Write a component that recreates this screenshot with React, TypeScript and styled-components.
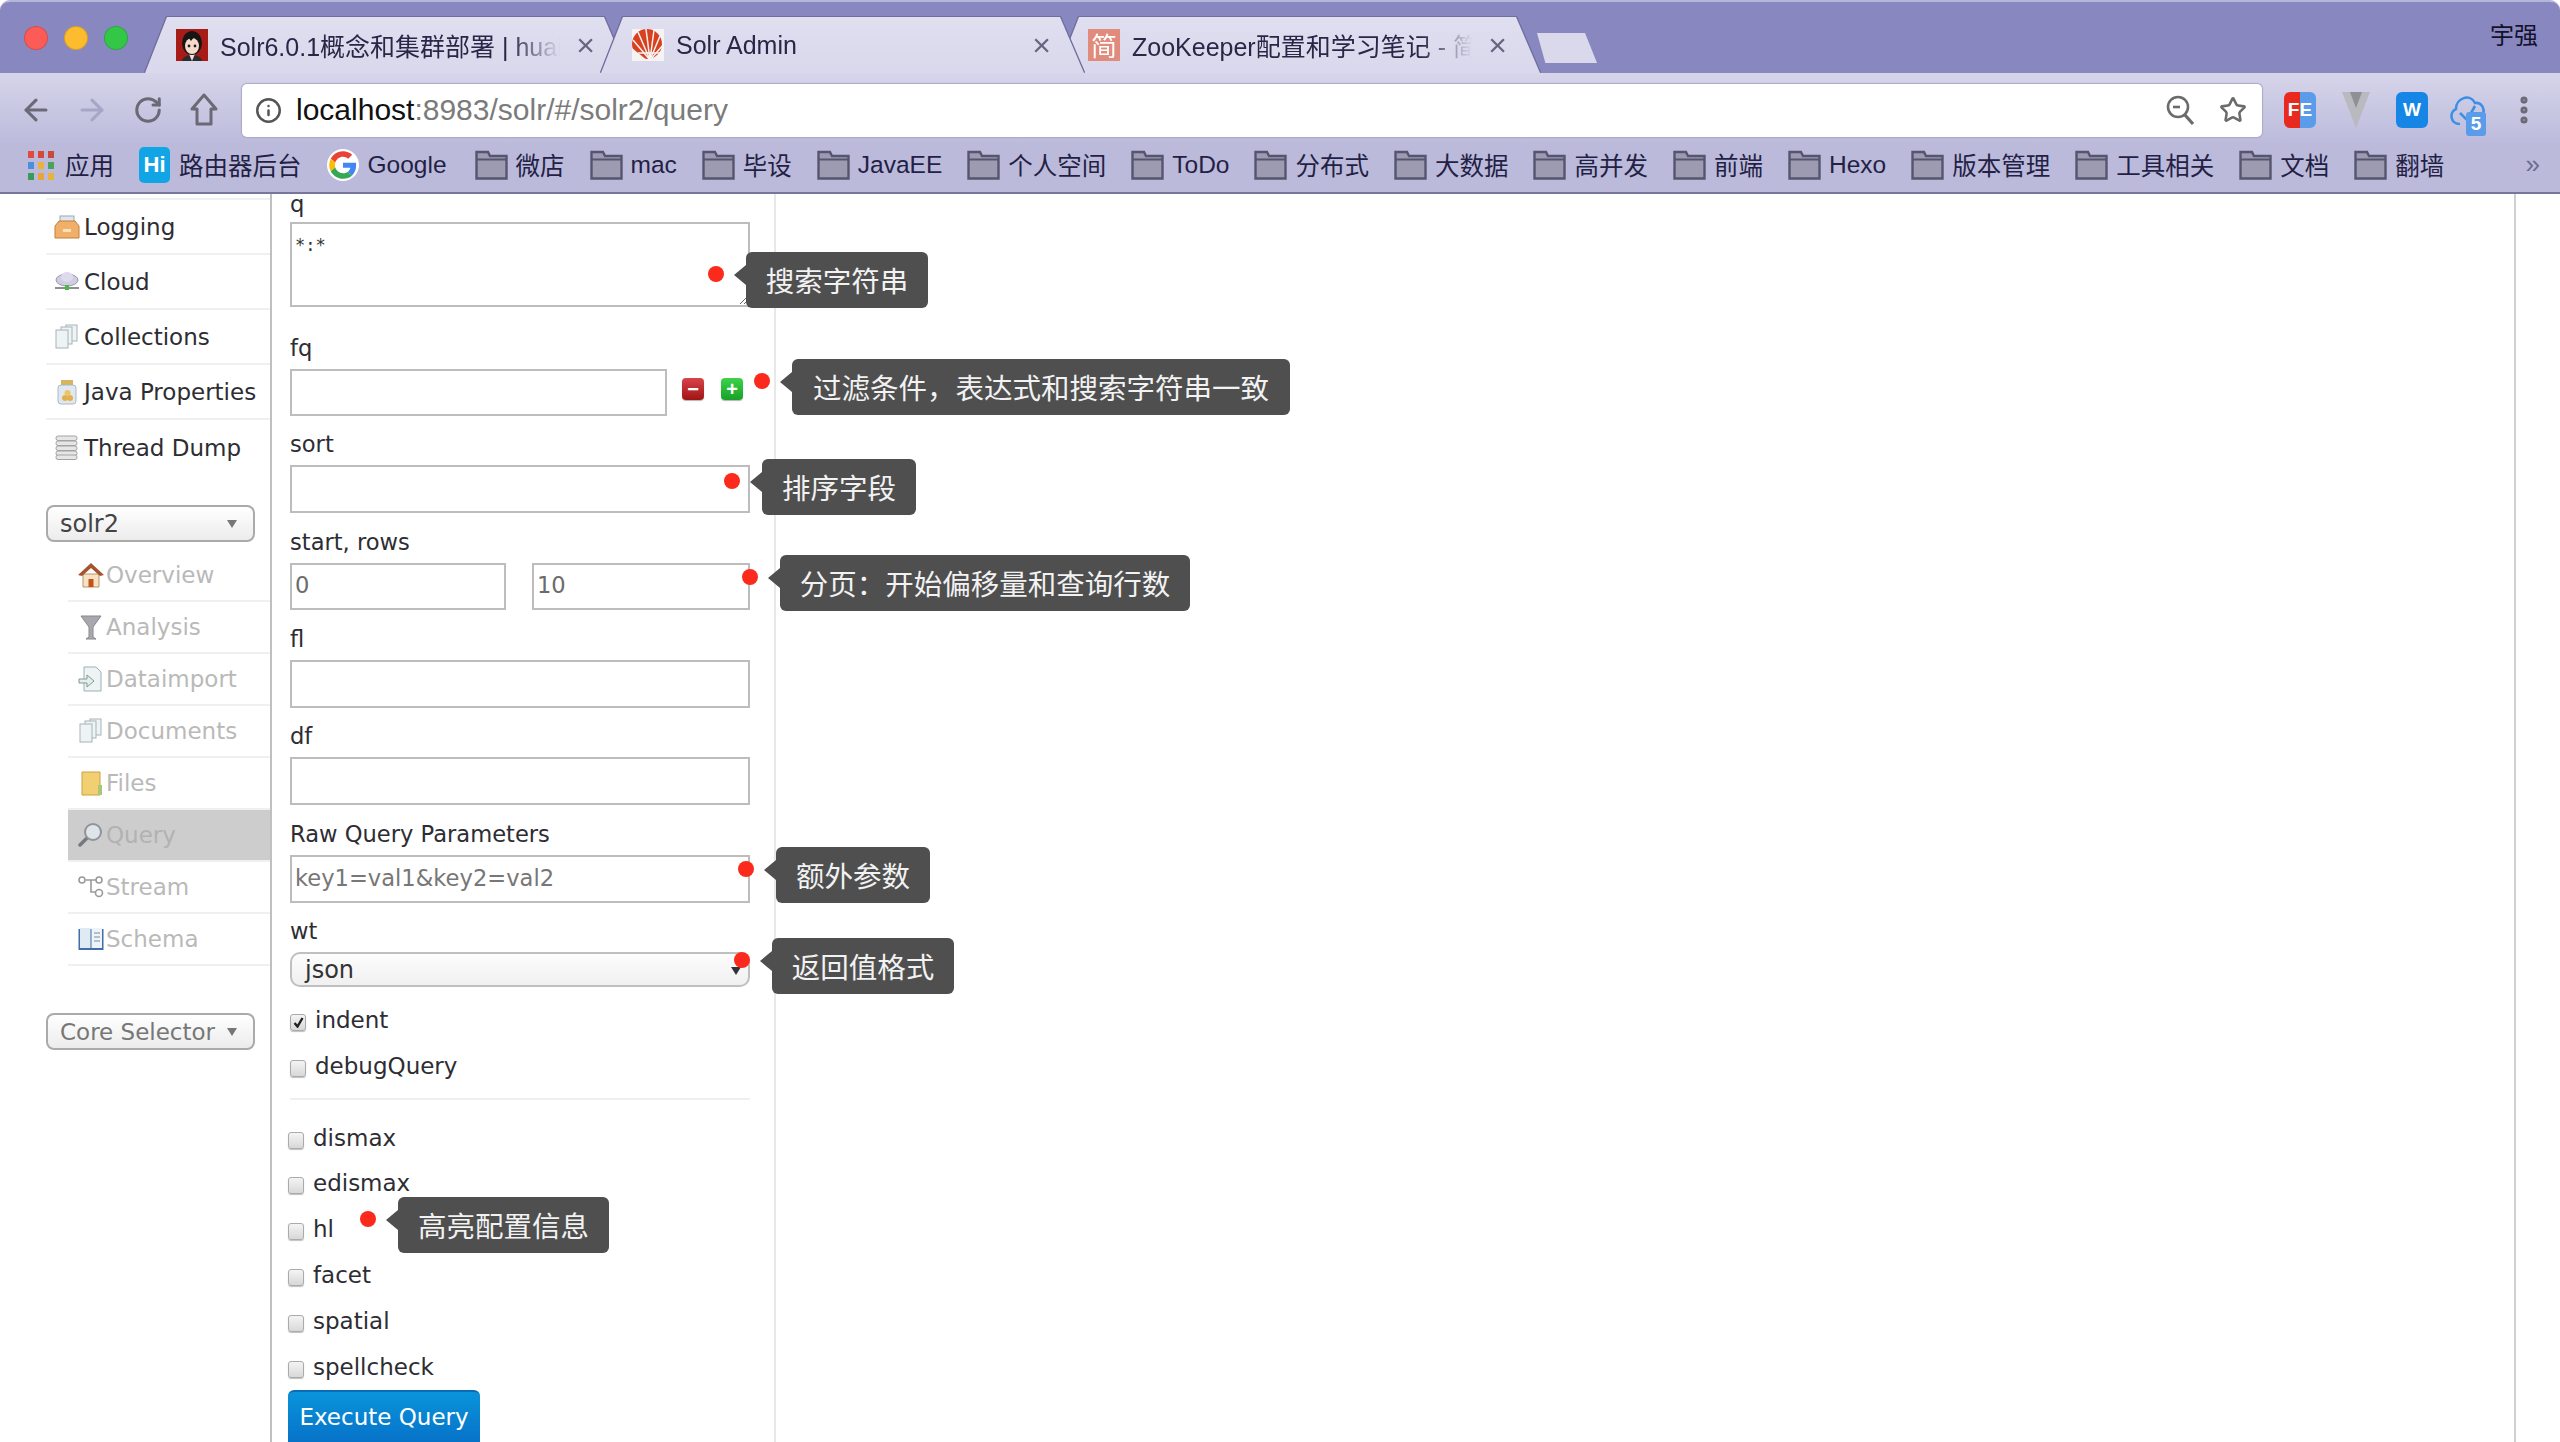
import React from "react";
import styled, { createGlobalStyle } from "styled-components";
import { ArrowLeft, ArrowRight, RotateCw, Star, Info, MoreVertical } from "lucide-react";

const GlobalStyle = createGlobalStyle`
  html, body { margin: 0; padding: 0; background: #fff; }
  * { box-sizing: border-box; }
`;

const UI_FONT = `"Liberation Sans", "Noto Sans CJK SC", sans-serif`;
const PAGE_FONT = `"DejaVu Sans", "Noto Sans CJK SC", sans-serif`;

const Page = styled.div`
  width: 2560px;
  height: 1442px;
  overflow: hidden;
  display: flex;
  flex-direction: column;
  font-family: ${PAGE_FONT};
`;

/* browser chrome */
const TabStrip = styled.div`
  height: 73px;
  flex: none;
  display: flex;
  align-items: flex-end;
  padding-left: 145px;
  position: relative;
  background: #8987c0;
  border-top: 2px solid #b5b4d9;
  border-radius: 10px 10px 0 0;
`;

const Lights = styled.div`
  position: absolute;
  left: 24px;
  top: 24px;
  display: flex;
  gap: 16px;
`;

const Light = styled.span<{ $color: string }>`
  width: 24px;
  height: 24px;
  border-radius: 50%;
  background: ${p => p.$color};
  border: 1px solid rgba(0, 0, 0, 0.15);
`;

const TabFrame = styled.div<{ $active?: boolean }>`
  width: 483px;
  height: 56px;
  margin-right: -27px;
  position: relative;
  z-index: ${p => (p.$active ? 2 : 1)};
  filter: drop-shadow(0 -1px 0 #6f6e9e) drop-shadow(1px 0 0 #6f6e9e) drop-shadow(-1px 0 0 #6f6e9e);
`;

const TabShape = styled.div`
  height: 100%;
  display: flex;
  align-items: center;
  padding: 0 33px 0 31px;
  gap: 12px;
  background: linear-gradient(#e0dff0, #d9d8ec);
  clip-path: polygon(22px 0, calc(100% - 24px) 0, 100% 100%, 0 100%);
`;

const TabTitle = styled.span<{ $fade?: boolean }>`
  flex: 1;
  min-width: 0;
  white-space: nowrap;
  overflow: hidden;
  font: 25px ${UI_FONT};
  color: #2b2547;
  ${p => p.$fade && `mask-image: linear-gradient(90deg, #000 84%, transparent 99%);`}
`;

const TabClose = styled.span`
  font: 32px/1 ${UI_FONT};
  color: #66657f;
`;

const NewTab = styled.div`
  width: 60px;
  height: 30px;
  margin: 0 0 10px 24px;
  background: #dad9ec;
  clip-path: polygon(0 0, 80% 0, 100% 100%, 14% 100%);
`;

const UserName = styled.span`
  margin-left: auto;
  align-self: center;
  padding: 0 22px 8px 0;
  font: 24px ${UI_FONT};
  color: #14122a;
`;

const Toolbar = styled.div`
  height: 70px;
  flex: none;
  display: flex;
  align-items: center;
  padding: 4px 14px 0;
  gap: 12px;
  background: linear-gradient(#d6d5ea, #bcbbdc);
`;

const ToolButton = styled.div<{ $color?: string }>`
  width: 44px;
  height: 44px;
  flex: none;
  display: flex;
  align-items: center;
  justify-content: center;
  position: relative;
  color: ${p => p.$color || "#6a6a76"};
`;

const AddressBar = styled.div`
  flex: 1;
  height: 53px;
  margin: 0 4px;
  display: flex;
  align-items: center;
  gap: 14px;
  padding: 0 15px 0 13px;
  background: #fff;
  border-radius: 5px;
  box-shadow: 0 0 1px 1px #a9a8c6;
`;

const Url = styled.span`
  flex: 1;
  font: 30px ${UI_FONT};
  color: #7b7b7b;
  b { font-weight: normal; color: #111; }
`;

const AddressTools = styled.div`
  display: flex;
  align-items: center;
  gap: 23px;
  color: #6b6b6b;
`;

const ExtIcon = styled.span<{ $bg: string }>`
  width: 32px;
  height: 36px;
  border-radius: 6px;
  display: flex;
  align-items: center;
  justify-content: center;
  background: ${p => p.$bg};
  color: #fff;
  font: bold 19px ${UI_FONT};
`;

const ExtBadge = styled.span`
  position: absolute;
  right: 4px;
  bottom: -4px;
  width: 20px;
  height: 24px;
  border-radius: 3px;
  background: #5a9bea;
  color: #fff;
  text-align: center;
  font: bold 19px/24px ${UI_FONT};
`;

const Bookmarks = styled.div`
  height: 51px;
  flex: none;
  display: flex;
  align-items: center;
  padding: 0 0 6px 27px;
  gap: 25px;
  background: #bbbadb;
  border-bottom: 2px solid #77769c;
  position: relative;
`;

const Bookmark = styled.div<{ $gap?: number; $after?: number }>`
  display: flex;
  align-items: center;
  gap: ${p => p.$gap || 8}px;
  margin-right: ${p => p.$after || 0}px;
  font: 24.5px ${UI_FONT};
  color: #241f45;
  white-space: nowrap;
`;

const HiIcon = styled.span`
  width: 31px;
  height: 36px;
  border-radius: 5px;
  background: #12a5e6;
  color: #fff;
  text-align: center;
  font: bold 22px/36px ${UI_FONT};
`;

const More = styled.span`
  position: absolute;
  right: 20px;
  top: 6px;
  font: 26px ${UI_FONT};
  color: #6d6c90;
`;

/* solr page */
const Content = styled.div`
  flex: 1;
  min-height: 0;
  display: flex;
  overflow: hidden;
  background: #fff;
`;

const Sidebar = styled.div`
  width: 272px;
  flex: none;
  padding: 4px 0 0 46px;
  border-right: 2px solid #c0c0c0;
`;

const GlobalNav = styled.div`
  border-top: 2px solid #f0f0f0;
  margin-bottom: 30px;
`;

const NavRow = styled.div<{ $last?: boolean }>`
  height: 55px;
  display: flex;
  align-items: center;
  padding-left: 8px;
  gap: 4px;
  font-size: 23px;
  color: #2d2d33;
  border-bottom: ${p => (p.$last ? "none" : "2px solid #f0f0f0")};
`;

const NavIcon = styled.span`
  width: 26px;
  height: 26px;
  flex: none;
  display: flex;
`;

const SelectButton = styled.div<{ $muted?: boolean }>`
  width: 209px;
  height: 37px;
  display: flex;
  align-items: center;
  justify-content: space-between;
  padding: 0 16px 0 12px;
  font-size: ${p => (p.$muted ? 23 : 24)}px;
  color: ${p => (p.$muted ? "#777" : "#444")};
  border: 2px solid #aaa;
  border-radius: 8px;
  background: linear-gradient(#fff, #ececec);
`;

const Caret = styled.span`
  width: 0;
  height: 0;
  border-left: 5px solid transparent;
  border-right: 5px solid transparent;
  border-top: 8px solid #777;
`;

const CoreNav = styled.div`
  margin: 8px 0 47px 22px;
`;

const CoreRow = styled.div<{ $active?: boolean }>`
  height: 52px;
  display: flex;
  align-items: center;
  padding-left: 10px;
  gap: 2px;
  font-size: 23px;
  color: ${p => (p.$active ? "#b2b2b2" : "#b9b9b9")};
  background: ${p => (p.$active ? "#cdcdcd" : "transparent")};
  border-bottom: 2px solid #f0f0f0;
`;

const FormColumn = styled.div`
  width: 504px;
  flex: none;
  padding: 0 0 0 18px;
  border-right: 2px solid #e8e8e8;
`;

const Blank = styled.div`
  width: 1740px;
  flex: none;
  border-right: 2px solid #d0d0d0;
`;

const Field = styled.div`
  width: 460px;
`;

const FieldLabel = styled.div`
  height: 49.6px;
  display: flex;
  align-items: flex-end;
  padding-bottom: 3px;
  font-size: 22.6px;
  line-height: 36px;
  color: #2d2d33;
`;

const FirstLabel = styled.div`
  height: 28px;
  font-size: 22.6px;
  line-height: 21px;
  color: #2d2d33;
`;

const ControlRow = styled.div`
  position: relative;
  display: flex;
  justify-content: space-between;
  align-items: flex-start;
`;

const TextBox = styled.input<{ $w?: number; $h?: number }>`
  display: block;
  width: ${p => p.$w || 460}px;
  height: ${p => p.$h || 47.8}px;
  padding: 0 3px 2px;
  border: 2px solid #bdbdbd;
  border-radius: 0;
  outline: none;
  font: 22.6px ${PAGE_FONT};
  color: #6b6b6b;
  &::placeholder { color: #777; opacity: 1; }
`;

const QueryArea = styled.textarea`
  display: block;
  width: 460px;
  height: 85px;
  padding: 11px 3px;
  margin-bottom: 12px;
  border: 2px solid #bdbdbd;
  border-radius: 0;
  outline: none;
  font: 17px "DejaVu Sans Mono", monospace;
  color: #333;
`;

const FilterButtons = styled.div`
  display: flex;
  gap: 17px;
  margin: 9px 7px 0 0;
`;

const FilterButton = styled.span<{ $top: string; $bottom: string }>`
  width: 22px;
  height: 22px;
  border-radius: 4px;
  display: flex;
  align-items: center;
  justify-content: center;
  background: linear-gradient(${p => p.$top}, ${p => p.$bottom});
  color: #fff;
  font: bold 20px/1 ${UI_FONT};
  box-shadow: 0 1px 1px rgba(0, 0, 0, 0.3);
`;

const WtSelect = styled.div`
  width: 460px;
  height: 35px;
  display: flex;
  align-items: center;
  padding: 0 13px;
  font-size: 24px;
  color: #333;
  border: 2px solid #c0c0c0;
  border-radius: 10px;
  background: linear-gradient(#fdfdfd, #f0f0f0);
`;

const WtArrows = styled.span`
  position: absolute;
  right: 9px;
  top: 15px;
  width: 0;
  height: 0;
  border-left: 5px solid transparent;
  border-right: 5px solid transparent;
  border-top: 8px solid #333;
`;

const Dot = styled.span<{ $x: number; $y: number }>`
  position: absolute;
  left: ${p => p.$x}px;
  top: ${p => p.$y}px;
  width: 16px;
  height: 16px;
  border-radius: 50%;
  background: #fb2a1c;
  z-index: 3;
`;

const Bubble = styled.div<{ $x: number; $y: number; $w: number }>`
  position: absolute;
  left: ${p => p.$x}px;
  top: ${p => p.$y}px;
  width: ${p => p.$w}px;
  height: 56px;
  border-radius: 6px;
  background: #4f4f4f;
  color: #f2f2f2;
  text-align: center;
  font: 28.5px/56px "Noto Sans CJK SC", sans-serif;
  white-space: nowrap;
  z-index: 3;
  &::before {
    content: "";
    position: absolute;
    left: -12px;
    top: 13px;
    border-top: 10px solid transparent;
    border-bottom: 10px solid transparent;
    border-right: 12px solid #4f4f4f;
  }
`;

const CheckGroup = styled.div`
  margin-top: 12px;
`;

const CheckRow = styled.div<{ $wide?: boolean }>`
  position: relative;
  height: ${p => (p.$wide ? "45.8px" : "46px")};
  display: flex;
  align-items: center;
  gap: 9px;
  font-size: 23px;
  color: #2d2d33;
  span:last-child { margin-top: -5px; }
`;

const CheckBox = styled.span`
  width: 16px;
  height: 17px;
  flex: none;
  display: flex;
  align-items: center;
  justify-content: center;
  border: 1px solid #aaa;
  border-radius: 3px;
  background: linear-gradient(#f4f4f4, #d8d8d8);
  box-shadow: 0 1px 1px rgba(0, 0, 0, 0.25);
`;

const Rule = styled.div`
  width: 460px;
  height: 2px;
  margin: 7px 0 17px;
  background: #efefef;
`;

const SearchTypes = styled.div`
  margin-left: -2px;
`;

const ExecuteButton = styled.div`
  width: 192px;
  height: 60px;
  margin: -1.5px 0 0 -2px;
  padding-top: 12px;
  text-align: center;
  font-size: 23px;
  font-weight: 500;
  color: #fff;
  border-top: 2px solid #0a6db8;
  border-radius: 6px 6px 0 0;
  background: linear-gradient(#0a94da, #066dc6);
`;

/* drawn icons */
const Avatar = () => (
  <svg width="32" height="32" viewBox="0 0 32 32" style={{ flex: "none" }}>
    <rect width="32" height="32" fill="#a81c18" />
    <path d="M6 32 C7 24 25 24 26 32 Z" fill="#2f2a2c" />
    <path d="M13 25 L16 32 L19 25 Z" fill="#e9e4e2" />
    <ellipse cx="16" cy="14" rx="10" ry="12" fill="#191517" />
    <ellipse cx="16" cy="17" rx="7" ry="8" fill="#f5dcc8" />
    <path d="M8 13 L12 8 L15 12 L19 7 L24 13 L24 8 L16 3 L8 8 Z" fill="#191517" />
    <circle cx="13" cy="17" r="1.4" fill="#222" />
    <circle cx="19" cy="17" r="1.4" fill="#222" />
  </svg>
);

const SolrLogo = () => (
  <svg width="32" height="32" viewBox="0 0 32 32" style={{ flex: "none" }}>
    <rect width="32" height="32" fill="#f6f3f4" />
    <circle cx="15" cy="15" r="15" fill="#d9411e" />
    <g stroke="#f6f3f4" strokeWidth="1.5">
      <path d="M18 31 L1 11" />
      <path d="M18 31 L6 3" />
      <path d="M18 31 L14 0" />
      <path d="M18 31 L22 1" />
      <path d="M18 31 L28 7" />
      <path d="M18 31 L32 15" />
      <path d="M6 24 L32 24" />
    </g>
    <path d="M0 19 L0 32 L16 32 Z" fill="#f6f3f4" />
    <path d="M32 19 L32 32 L22 32 Z" fill="#f6f3f4" />
  </svg>
);

const JianIcon = styled.span`
  width: 32px;
  height: 32px;
  flex: none;
  background: #e08b7b;
  color: #fff;
  text-align: center;
  font: 26px/32px "Noto Sans CJK SC", sans-serif;
`;

const HomeIcon = () => (
  <svg width="30" height="36" viewBox="0 0 30 36" fill="none" stroke="currentColor" strokeWidth="3">
    <path d="M15 3 L3 17 L8 17 L8 32 L22 32 L22 17 L27 17 Z" strokeLinejoin="round" />
  </svg>
);

const ZoomOutIcon = () => (
  <svg width="30" height="32" viewBox="0 0 30 32" fill="none" stroke="currentColor" strokeWidth="2.6">
    <circle cx="12" cy="13" r="10" />
    <path d="M7 13 H14" />
    <path d="M19 21 L27 30" strokeWidth="3.2" />
  </svg>
);

const AppsIcon = () => (
  <svg width="28" height="30" viewBox="0 0 28 30">
    {["#e24a3b", "#d9473a", "#c84a3e", "#4a8fdc", "#e8b23c", "#4aa35a", "#3a9a58", "#e8a53c", "#e8b23c"].map((c, i) => (
      <rect key={i} x={(i % 3) * 10 + 1} y={Math.floor(i / 3) * 11 + 1} width="6" height="7" fill={c} />
    ))}
  </svg>
);

const GoogleIcon = () => (
  <svg width="32" height="32" viewBox="-4 -4 56 56">
    <circle cx="24" cy="24" r="28" fill="#fff" />
    <path fill="#EA4335" d="M24 9.5c3.54 0 6.71 1.22 9.21 3.6l6.85-6.85C35.9 2.38 30.47 0 24 0 14.62 0 6.51 5.38 2.56 13.22l7.98 6.19C12.43 13.72 17.74 9.5 24 9.5z" />
    <path fill="#4285F4" d="M46.98 24.55c0-1.57-.15-3.09-.38-4.55H24v9.02h12.94c-.58 2.96-2.26 5.48-4.78 7.18l7.73 6c4.51-4.18 7.09-10.36 7.09-17.65z" />
    <path fill="#FBBC05" d="M10.53 28.59c-.48-1.45-.76-2.99-.76-4.59s.27-3.14.76-4.59l-7.98-6.19C.92 16.46 0 20.12 0 24c0 3.88.92 7.54 2.56 10.78l7.97-6.19z" />
    <path fill="#34A853" d="M24 48c6.48 0 11.93-2.13 15.89-5.81l-7.73-6c-2.15 1.45-4.92 2.3-8.16 2.3-6.26 0-11.57-4.22-13.47-9.91l-7.98 6.19C6.51 42.62 14.62 48 24 48z" />
  </svg>
);

const FolderIcon = () => (
  <svg width="33" height="30" viewBox="0 0 33 30">
    <path d="M1.5 28.5 V2 H13 L15 6 H31.5 V28.5 Z" fill="#9c9bb2" stroke="#56556f" strokeWidth="2.4" />
    <path d="M1.5 9.5 H31.5" stroke="#56556f" strokeWidth="2" />
  </svg>
);

const VIcon = () => (
  <svg width="32" height="40" viewBox="0 0 32 40">
    <path d="M2 2 H30 L16 38 Z" fill="#b9b9c0" />
    <path d="M10 2 H22 L16 18 Z" fill="#8f8f96" />
  </svg>
);

const CloudCheck = () => (
  <svg width="40" height="44" viewBox="0 0 40 44" fill="none" stroke="#3b8fe6" strokeWidth="2.6">
    <path d="M12 36 C2 36 1 24 8 21 C8 10 22 5 27 15 C33 14 37 20 35 26" />
    <path d="M12 25 L19 32 L27 18" />
  </svg>
);

const TrayIcon = () => (
  <svg viewBox="0 0 26 26" width="26" height="26">
    <rect x="6" y="2" width="14" height="12" fill="#dfe6ec" stroke="#9aa8b5" />
    <path d="M1 12 L5 7 H21 L25 12 V24 H1 Z" fill="#f0b06a" stroke="#c67f36" />
    <rect x="9" y="15" width="8" height="3" fill="#fbe0b8" />
  </svg>
);

const CloudIcon = () => (
  <svg viewBox="0 0 26 26" width="26" height="26">
    <ellipse cx="13" cy="11" rx="11" ry="6" fill="#cfcde0" stroke="#9997b2" />
    <ellipse cx="13" cy="8" rx="6" ry="5" fill="#dedcec" />
    <path d="M1 19 H25" stroke="#8e8e8e" strokeWidth="2" />
    <path d="M13 16 V21" stroke="#4db84a" strokeWidth="4" />
  </svg>
);

const PagesIcon = () => (
  <svg viewBox="0 0 26 26" width="26" height="26" fill="#eef3f4" stroke="#a7b4b8">
    <rect x="12" y="1" width="11" height="16" />
    <rect x="7" y="3" width="11" height="17" />
    <rect x="2" y="6" width="12" height="18" />
  </svg>
);

const JarIcon = () => (
  <svg viewBox="0 0 26 26" width="26" height="26">
    <rect x="7" y="1" width="12" height="5" fill="#d9b45c" />
    <rect x="4" y="6" width="18" height="19" rx="3" fill="#dfe8f0" stroke="#aab8c4" />
    <circle cx="11" cy="19" r="3" fill="#e2b04c" />
    <circle cx="16" cy="19" r="3" fill="#e2b04c" />
    <circle cx="13.5" cy="14" r="3" fill="#eec268" />
  </svg>
);

const StackIcon = () => (
  <svg viewBox="0 0 26 26" width="26" height="26" fill="#e6e6e6" stroke="#a3a3a3">
    {[1, 6, 11, 16, 20].map(y => (
      <rect key={y} x="2" y={y} width="21" height="4.5" rx="2" />
    ))}
  </svg>
);

const HouseIcon = () => (
  <svg viewBox="0 0 26 26" width="26" height="26">
    <path d="M5 12 H21 V25 H5 Z" fill="#f6e3c4" stroke="#b9946a" />
    <path d="M0 13 L13 1 L26 13 L22 14 L13 6 L4 14 Z" fill="#a3552f" />
    <rect x="10.5" y="17" width="5" height="8" fill="#c4521f" />
  </svg>
);

const FunnelIcon = () => (
  <svg viewBox="0 0 26 26" width="26" height="26">
    <path d="M3 2 H23 L15 13 V23 L18 25 H8 L11 23 V13 Z" fill="#a8a8ae" stroke="#88888e" />
  </svg>
);

const ImportIcon = () => (
  <svg viewBox="0 0 26 26" width="26" height="26">
    <path d="M6 1 H18 L23 6 V25 H6 Z" fill="#eef3f4" stroke="#9bb0b6" />
    <path d="M1 13 H9 V9 L16 15 L9 21 V17 H1 Z" fill="#e4efe9" stroke="#7f9a92" />
  </svg>
);

const FileIcon = () => (
  <svg viewBox="0 0 26 26" width="26" height="26">
    <path d="M4 2 H22 V25 H4 Z" fill="#f3cf74" stroke="#c9a23e" />
    <path d="M20 15 L24 15 L24 25 L20 25 Z" fill="#a8c878" />
  </svg>
);

const LensIcon = () => (
  <svg viewBox="0 0 26 26" width="26" height="26">
    <path d="M9 16 L2 23" stroke="#77777f" strokeWidth="3.5" strokeLinecap="round" />
    <circle cx="15" cy="10" r="8" fill="#dfe4e8" stroke="#8f949b" strokeWidth="2" />
  </svg>
);

const StreamIcon = () => (
  <svg viewBox="0 0 26 26" width="26" height="26" fill="#fff" stroke="#9a9a9a" strokeWidth="1.6">
    <path d="M8 6 H20 M13 6 V18 H19" />
    <circle cx="4" cy="6" r="3" />
    <circle cx="21" cy="6" r="3" />
    <circle cx="21" cy="19" r="3.5" />
  </svg>
);

const BookIcon = () => (
  <svg viewBox="0 0 26 26" width="26" height="26">
    <rect x="0.5" y="3" width="25" height="21" fill="#3f6ea8" />
    <rect x="2" y="2" width="10.5" height="20" fill="#dfeaf3" />
    <rect x="13.5" y="2" width="10.5" height="20" fill="#eef3f7" />
    <path d="M16 7 H22 M16 11 H22 M16 15 H22" stroke="#9db0c0" strokeWidth="1.4" />
  </svg>
);

const Tick = () => (
  <svg width="11" height="11" viewBox="0 0 11 11" fill="none" stroke="#222" strokeWidth="2.4">
    <path d="M1.5 6 L4.5 9.5 L9.5 1" />
  </svg>
);

const TABS = [
  { icon: <Avatar />, title: "Solr6.0.1概念和集群部署 | huai", fade: true },
  { icon: <SolrLogo />, title: "Solr Admin", active: true },
  { icon: <JianIcon>简</JianIcon>, title: "ZooKeeper配置和学习笔记 - 简书", fade: true },
];

const FOLDERS = ["微店", "mac", "毕设", "JavaEE", "个人空间", "ToDo", "分布式", "大数据", "高并发", "前端", "Hexo", "版本管理", "工具相关", "文档", "翻墙"];

const GLOBAL_NAV = [
  { label: "Logging", icon: <TrayIcon /> },
  { label: "Cloud", icon: <CloudIcon /> },
  { label: "Collections", icon: <PagesIcon /> },
  { label: "Java Properties", icon: <JarIcon /> },
  { label: "Thread Dump", icon: <StackIcon /> },
];

const CORE_NAV = [
  { label: "Overview", icon: <HouseIcon /> },
  { label: "Analysis", icon: <FunnelIcon /> },
  { label: "Dataimport", icon: <ImportIcon /> },
  { label: "Documents", icon: <PagesIcon /> },
  { label: "Files", icon: <FileIcon /> },
  { label: "Query", icon: <LensIcon />, active: true },
  { label: "Stream", icon: <StreamIcon /> },
  { label: "Schema", icon: <BookIcon /> },
];

const Check = ({ label, checked, wide, children }: { label: string; checked?: boolean; wide?: boolean; children?: React.ReactNode }) => (
  <CheckRow $wide={wide}>
    {children}
    <CheckBox>{checked && <Tick />}</CheckBox>
    <span>{label}</span>
  </CheckRow>
);

export default function App() {
  return (
    <Page>
      <GlobalStyle />
      <TabStrip>
        <Lights>
          <Light $color="#fc5b57" />
          <Light $color="#fdbc2e" />
          <Light $color="#33c748" />
        </Lights>
        {TABS.map(t => (
          <TabFrame key={t.title} $active={t.active}>
            <TabShape>
              {t.icon}
              <TabTitle $fade={t.fade}>{t.title}</TabTitle>
              <TabClose>×</TabClose>
            </TabShape>
          </TabFrame>
        ))}
        <NewTab />
        <UserName>宇强</UserName>
      </TabStrip>

      <Toolbar>
        <ToolButton><ArrowLeft size={34} strokeWidth={2.2} /></ToolButton>
        <ToolButton $color="#a6a6c6"><ArrowRight size={34} strokeWidth={2.2} /></ToolButton>
        <ToolButton><RotateCw size={30} strokeWidth={2.4} /></ToolButton>
        <ToolButton><HomeIcon /></ToolButton>
        <AddressBar>
          <Info size={27} color="#555" strokeWidth={2.2} />
          <Url><b>localhost</b>:8983/solr/#/solr2/query</Url>
          <AddressTools>
            <ZoomOutIcon />
            <Star size={28} strokeWidth={2.2} />
          </AddressTools>
        </AddressBar>
        <ToolButton><ExtIcon $bg="linear-gradient(90deg, #e8291f 50%, #5a9bea 50%)">FE</ExtIcon></ToolButton>
        <ToolButton><VIcon /></ToolButton>
        <ToolButton><ExtIcon $bg="#1686e6">W</ExtIcon></ToolButton>
        <ToolButton><CloudCheck /><ExtBadge>5</ExtBadge></ToolButton>
        <ToolButton><MoreVertical size={34} strokeWidth={3} /></ToolButton>
      </Toolbar>

      <Bookmarks>
        <Bookmark $gap={10}><AppsIcon />应用</Bookmark>
        <Bookmark $gap={9}><HiIcon>Hi</HiIcon>路由器后台</Bookmark>
        <Bookmark $gap={9} $after={3}><GoogleIcon />Google</Bookmark>
        {FOLDERS.map(f => (
          <Bookmark key={f}><FolderIcon />{f}</Bookmark>
        ))}
        <More>»</More>
      </Bookmarks>

      <Content>
        <Sidebar>
          <GlobalNav>
            {GLOBAL_NAV.map((n, i) => (
              <NavRow key={n.label} $last={i === GLOBAL_NAV.length - 1}>
                <NavIcon>{n.icon}</NavIcon>
                {n.label}
              </NavRow>
            ))}
          </GlobalNav>
          <SelectButton>solr2<Caret /></SelectButton>
          <CoreNav>
            {CORE_NAV.map(n => (
              <CoreRow key={n.label} $active={n.active}>
                <NavIcon>{n.icon}</NavIcon>
                {n.label}
              </CoreRow>
            ))}
          </CoreNav>
          <SelectButton $muted>Core Selector<Caret /></SelectButton>
        </Sidebar>

        <FormColumn>
          <Field>
            <FirstLabel>q</FirstLabel>
            <ControlRow>
              <QueryArea readOnly defaultValue="*:*" />
              <Dot $x={418} $y={44} />
              <Bubble $x={456} $y={30} $w={182}>搜索字符串</Bubble>
            </ControlRow>
          </Field>
          <Field>
            <FieldLabel>fq</FieldLabel>
            <ControlRow>
              <TextBox $w={377} $h={47} readOnly />
              <FilterButtons>
                <FilterButton $top="#d8434a" $bottom="#a01414">−</FilterButton>
                <FilterButton $top="#3ed24a" $bottom="#18a028">+</FilterButton>
              </FilterButtons>
              <Dot $x={464} $y={4} />
              <Bubble $x={502} $y={-10} $w={498}>过滤条件，表达式和搜索字符串一致</Bubble>
            </ControlRow>
          </Field>
          <Field>
            <FieldLabel>sort</FieldLabel>
            <ControlRow>
              <TextBox readOnly />
              <Dot $x={434} $y={8} />
              <Bubble $x={472} $y={-6} $w={154}>排序字段</Bubble>
            </ControlRow>
          </Field>
          <Field>
            <FieldLabel>start, rows</FieldLabel>
            <ControlRow>
              <TextBox $w={216} readOnly defaultValue="0" />
              <TextBox $w={218} readOnly defaultValue="10" />
              <Dot $x={452} $y={6} />
              <Bubble $x={490} $y={-8} $w={410}>分页：开始偏移量和查询行数</Bubble>
            </ControlRow>
          </Field>
          <Field>
            <FieldLabel>fl</FieldLabel>
            <ControlRow><TextBox readOnly /></ControlRow>
          </Field>
          <Field>
            <FieldLabel>df</FieldLabel>
            <ControlRow><TextBox readOnly /></ControlRow>
          </Field>
          <Field>
            <FieldLabel>Raw Query Parameters</FieldLabel>
            <ControlRow>
              <TextBox readOnly placeholder="key1=val1&key2=val2" />
              <Dot $x={448} $y={6} />
              <Bubble $x={486} $y={-8} $w={154}>额外参数</Bubble>
            </ControlRow>
          </Field>
          <Field>
            <FieldLabel>wt</FieldLabel>
            <ControlRow>
              <WtSelect>json</WtSelect>
              <WtArrows />
              <Dot $x={444} $y={0} />
              <Bubble $x={482} $y={-14} $w={182}>返回值格式</Bubble>
            </ControlRow>
          </Field>
          <CheckGroup>
            <Check label="indent" checked />
            <Check label="debugQuery" />
          </CheckGroup>
          <Rule />
          <SearchTypes>
            <Check wide label="dismax" />
            <Check wide label="edismax" />
            <Check wide label="hl">
              <Dot $x={72} $y={2} />
              <Bubble $x={110} $y={-12} $w={211}>高亮配置信息</Bubble>
            </Check>
            <Check wide label="facet" />
            <Check wide label="spatial" />
            <Check wide label="spellcheck" />
          </SearchTypes>
          <ExecuteButton>Execute Query</ExecuteButton>
        </FormColumn>
        <Blank />
      </Content>
    </Page>
  );
}
